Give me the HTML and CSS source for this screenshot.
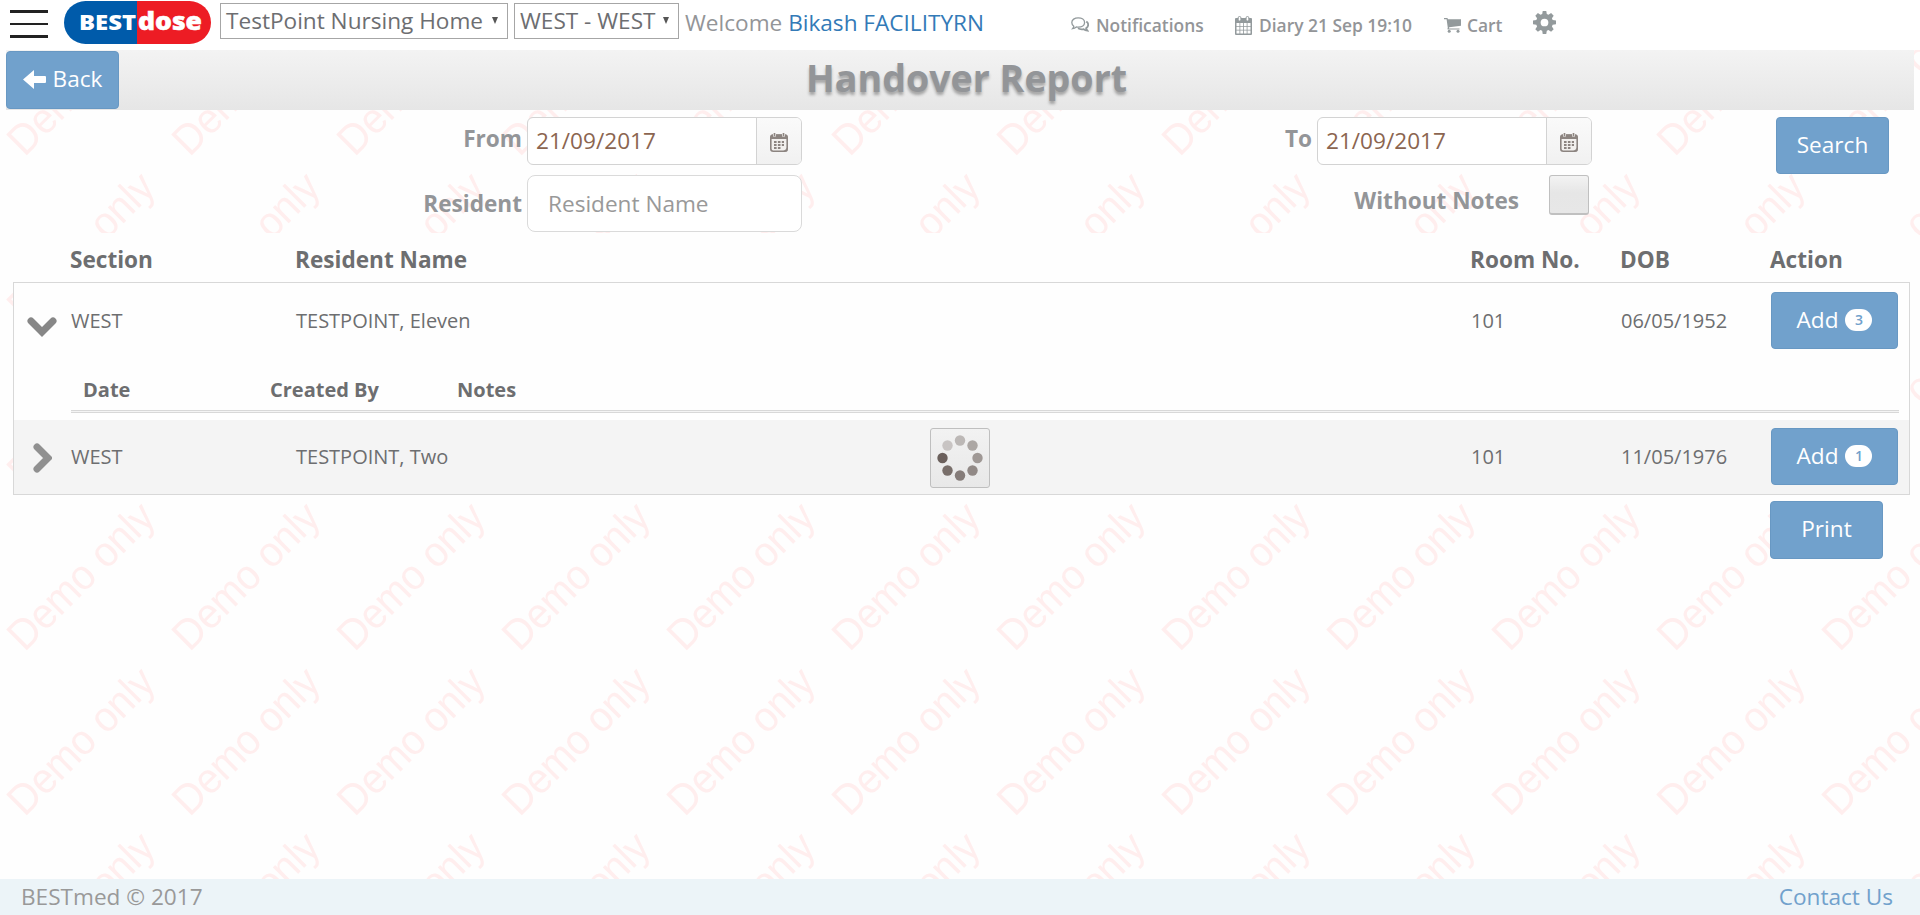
FILE: index.html
```html
<!DOCTYPE html>
<html lang="en">
<head>
<meta charset="utf-8">
<title>Handover Report</title>
<link rel="stylesheet" href="styles.css">
</head>
<body>
<svg class="watermark" width="1920" height="829">
  <defs>
    <pattern id="demo" width="165" height="165" patternUnits="userSpaceOnUse" y="-50">
      <text transform="translate(24.500 157.500) rotate(-45) scale(1 1.060)" class="watermark-text" textLength="188">Demo only</text>
    </pattern>
  </defs>
  <rect width="1920" height="829" fill="url(#demo)"/>
</svg>

<header class="topbar">
  <div class="menu"><span></span><span class="thin"></span><span></span></div>
  <svg class="logo" width="147" height="43" viewBox="0 0 147 43">
    <path d="M73 0H21.500a21.500 21.500 0 0 0 0 43H73z" fill="#005baa"/>
    <path d="M73 0h52.500a21.500 21.500 0 0 1 0 43H73z" fill="#ed1c24"/>
    <text x="15" y="28.500" class="logo-best" textLength="57" lengthAdjust="spacingAndGlyphs">BEST</text>
    <text x="74" y="28.500" class="logo-dose" textLength="64" lengthAdjust="spacingAndGlyphs">dose</text>
  </svg>
  <div class="select facility"><span>TestPoint Nursing Home</span><i class="caret"></i></div>
  <div class="select wing"><span>WEST - WEST</span><i class="caret"></i></div>
  <div class="welcome">Welcome <a>Bikash FACILITYRN</a></div>
  <nav class="links">
    <a class="link notifications">
      <svg width="18" height="16" viewBox="0 0 18 16" fill="none" stroke="#939a9c" stroke-width="1.300"><path d="M7.200.8c3.600 0 6.400 2 6.400 4.700s-2.800 4.700-6.400 4.700c-.7 0-1.300-.1-1.900-.2C4.200 10.900 3 11.400 1.600 11.600c.6-.7 1-1.400 1.200-2.300C1.500 8.400.8 7.100.8 5.500.8 2.800 3.600.8 7.200.8z"/><path d="M15.300 4.600c1.200.8 1.900 1.800 1.900 3.100 0 1.500-.8 2.700-2.100 3.500.2 1 .6 1.700 1.300 2.500-1.500-.2-2.700-.7-3.800-1.600-2 .4-4.100.1-5.600-.8" stroke-width="1.800"/></svg>
      <span>Notifications</span></a>
    <a class="link diary">
      <svg width="17" height="19" viewBox="0 0 17 19"><path d="M1 3h15v15H1z" fill="#939a9c" stroke="#939a9c" stroke-width="2" stroke-linejoin="round"/><path d="M1.500 7h3v3h-3zM5.300 7h2.800v3H5.300zM8.900 7h2.800v3H8.900zM12.500 7h3v3h-3zM1.500 10.800h3v3h-3zM5.300 10.800h2.800v3H5.300zM8.900 10.800h2.800v3H8.900zM12.500 10.800h3v3h-3zM1.500 14.600h3v3h-3zM5.300 14.600h2.800v3H5.300zM8.900 14.600h2.800v3H8.900zM12.500 14.600h3v3h-3z" fill="#fff"/><rect x="3.200" y=".5" width="2.700" height="4.500" rx="1.300" fill="#fff" stroke="#939a9c"/><rect x="11.100" y=".5" width="2.700" height="4.500" rx="1.300" fill="#fff" stroke="#939a9c"/></svg>
      <span>Diary 21 Sep 19:10</span></a>
    <a class="link cart">
      <svg width="17" height="15" viewBox="0 0 17 15" fill="#939a9c"><path d="M0 0h3.200q.5 0 .7 1.200H17v6.500L5.200 9.200l-.2 1.200H15.500v1.200H3.800q-.8-.2 0-1.800L2.600 1.300H0z"/><circle cx="5.200" cy="13.300" r="1.500"/><circle cx="14" cy="13.300" r="1.500"/></svg>
      <span>Cart</span></a>
    <svg class="gear" width="23" height="23" viewBox="0 0 22 22"><path fill="#939a9c" fill-rule="evenodd" d="M9.300 0h3.400l.5 2.900 1.600.7L17.300 2l2.500 2.500-1.700 2.500.7 1.600 3.200.6v3.500l-3.200.5-.7 1.700 1.700 2.500-2.500 2.500-2.500-1.700-1.600.7-.5 3.100H9.300l-.5-3.100-1.700-.7-2.400 1.700-2.500-2.500 1.700-2.500-.7-1.700-3.200-.5V9.200l3.200-.6.7-1.600-1.700-2.500L4.700 2l2.400 1.600 1.700-.7zM11 7.300a3.700 3.700 0 1 0 0 7.400 3.700 3.700 0 0 0 0-7.400z"/></svg>
  </nav>
</header>

<div class="titlebar">
  <button class="btn back"><svg width="23" height="19" viewBox="0 0 23 19"><path d="M11 0v6h11q1 0 1 1v5q0 1-1 1H11v6L0 9.500z" fill="#fff"/></svg><span>Back</span></button>
  <h1>Handover Report</h1>
</div>

<form class="filters">
  <label class="label from-label">From</label>
  <div class="date"><span>21/09/2017</span><i class="addon"><svg width="18" height="19" viewBox="0 0 18 19"><use href="#cal"/></svg></i></div>
  <label class="label to-label">To</label>
  <div class="date"><span>21/09/2017</span><i class="addon"><svg width="18" height="19" viewBox="0 0 18 19"><g id="cal"><rect x=".8" y="2" width="16.400" height="16.200" rx="2.500" fill="#f1efed" stroke="#8c8480" stroke-width="1.600"/><path d="M.5 6V4a2.500 2.500 0 0 1 2.500-2.500h12A2.500 2.500 0 0 1 17.500 4v2zM12 18.500q4-1 5.500-5v3.500q0 1.500-1.500 1.500z" fill="#8c8480"/><path d="M4.500 0v3.500M13.500 0v3.500" stroke="#f1efed" stroke-width="3"/><path d="M4.500 0v3M13.500 0v3" stroke="#8c8480" stroke-width="1.600"/><path d="M4 9h10M4 12h10M4 15h6.500" stroke="#8c8480" stroke-width="2.200" stroke-dasharray="2.600 1.300"/></g></svg></i></div>
  <button type="button" class="btn search">Search</button>
  <label class="label resident-label">Resident</label>
  <div class="resident">Resident Name</div>
  <label class="label notes-label">Without Notes</label>
  <span class="check"></span>
</form>

<main class="report">
  <div class="row head">
    <span></span><span>Section</span><span>Resident Name</span><span>Room No.</span><span>DOB</span><span>Action</span>
  </div>
  <div class="table">
    <div class="row first">
      <svg class="chev down" width="30" height="20" viewBox="0 0 30 20"><path d="M4 4l11 11L26 4" fill="none" stroke="#878787" stroke-width="7" stroke-linecap="round"/></svg>
      <span>WEST</span><span>TESTPOINT, Eleven</span><span>101</span><span>06/05/1952</span>
      <button class="btn add">Add<b>3</b></button>
    </div>
    <div class="notes">
      <span>Date</span><span>Created By</span><span>Notes</span>
    </div>
    <div class="row second">
      <svg class="chev right" width="19" height="30" viewBox="0 0 19 30"><path d="M4 4l11 11L4 26" fill="none" stroke="#909090" stroke-width="7" stroke-linecap="round"/></svg>
      <span>WEST</span><span>TESTPOINT, Two</span><span>101</span><span>11/05/1976</span>
      <button class="btn add">Add<b>1</b></button>
    </div>
    <div class="loading">
      <svg width="46" height="46" viewBox="-23 -23 46 46">
        <circle cy="-17.500" r="5.200" fill="#bcb8b6"/><circle cx="12.500" cy="-12.500" r="5.200" fill="#aca7a4"/><circle cx="17.500" r="5.200" fill="#9f9895"/><circle cx="12.500" cy="12.500" r="5.200" fill="#918986"/><circle cy="17.500" r="5.200" fill="#857c79"/><circle cx="-12.500" cy="12.500" r="5.200" fill="#786e6a"/><circle cx="-17.500" r="5.200" fill="#6b605c"/><circle cx="-12.500" cy="-12.500" r="5.200" fill="#c8c4c3"/>
      </svg>
    </div>
  </div>
  <button class="btn print">Print</button>
</main>

<footer class="footer"><span>BESTmed © 2017</span><a>Contact Us</a></footer>
</body>
</html>
```
FILE: styles.css
```css
* { box-sizing: border-box; }
body {
  margin: 0;
  height: 915px;
  display: flex;
  flex-direction: column;
  background: #fefefe;
  color: #939598;
  font: 22.6px/36px "Open Sans", sans-serif;
  overflow: hidden;
}
/* page-wide watermark behind all content */
.watermark { position: absolute; left: 0; top: 50px; z-index: -1; }
.watermark-text { font: 40px "Liberation Sans", sans-serif; fill: #ffeeee; }

.topbar { height: 50px; flex: none; display: flex; align-items: flex-start; background: #fff; }
.menu { width: 38px; height: 28px; margin: 10px 16px 0 10px; display: flex; flex-direction: column; justify-content: space-between; }
.menu span { height: 3px; background: #222; }
.menu .thin { height: 2px; }
.logo { margin: 1px 9px 0 0; flex: none; }
.logo-best { font: 800 21px "Open Sans", sans-serif; fill: #fff; }
.logo-dose { font: 800 24px "Open Sans", sans-serif; fill: #fff; stroke: #fff; stroke-width: .5px; }
.select { height: 36px; margin-top: 3px; border: 1px solid #a6a6a6; display: flex; align-items: center; justify-content: space-between; padding: 0 9px 1px 5px; color: #6d6e71; white-space: nowrap; background: #fff; }
.facility { width: 288px; margin-right: 6px; }
.wing { width: 165px; margin-right: 6px; }
.caret { border: 3.5px solid transparent; border-top: 7px solid #555; border-bottom: 0; }
.welcome { margin-top: 5px; width: 386px; white-space: nowrap; }
.welcome a { color: #337ab7; }
.links { display: flex; color: #939598; font-size: 17.4px; font-weight: 600; line-height: 24px; margin-top: 13px; }
.link { display: flex; align-items: center; gap: 7px; white-space: nowrap; }
.notifications { width: 164px; }
.diary { width: 209px; }
.cart { width: 89px; gap: 6px; }
.gear { margin-top: -2px; }

.titlebar { height: 60px; flex: none; margin: 0 6px; display: grid; grid-template-columns: 113px 1fr 100px; background: linear-gradient(#f3f3f3, #e6e6e6); }
.titlebar h1 { margin: 0; text-align: center; font: 700 37.6px/56px "Open Sans", sans-serif; text-shadow: 0 3px 3px rgba(0, 0, 0, .3); }
.btn { display: flex; align-items: center; justify-content: center; height: 57px; padding: 0 0 2px; border: 1px solid #6898c3; border-radius: 4px; background: #71a1cc; color: #fff; font: 22.6px/36px "Open Sans", sans-serif; }
.back { width: 113px; height: 58px; margin-top: 1px; gap: 7px; }

.filters { height: 123px; flex: none; display: grid; grid-template-columns: 527px 275px 515px 275px 184px 113px; grid-template-rows: 58px 57px; padding-top: 7px; }
.label { font-weight: 700; text-align: right; padding: 4px 5px 0 0; }
.date { height: 48px; display: flex; border: 1px solid #d3d3d3; border-radius: 6px; background: #fff; color: #8b6550; overflow: hidden; }
.date span { flex: 1; padding: 5px 8px; }
.addon { width: 45px; border-left: 1px solid #d3d3d3; background: linear-gradient(#fafafa, #f1f1f1); display: flex; align-items: center; justify-content: center; padding-top: 3px; }
.search { grid-column: 6; }
.resident { height: 57px; padding: 10px 20px; border: 1px solid #dadada; border-radius: 8px; background: #fff; color: #999; }
.resident-label { padding-top: 11px; }
.notes-label { grid-column: 3 / 5; padding: 8px 73px 0 0; }
.filters > .check { grid-column: 4; grid-row: 2; justify-self: end; }
.filters > .notes-label { grid-row: 2; }
.check { width: 40px; height: 40px; margin-right: 3px; border: 1px solid #c0c0c0; border-bottom-width: 2px; border-radius: 3px; background: linear-gradient(#f3f3f3, #e6e6e6 45%, #e7e7e7); }

.report { flex: 1; margin: 0 10px 0 13px; color: #6d6e70; }
.row { display: grid; grid-template-columns: 57px 225px 1175px 150px 150px 127px; }
.head { height: 49px; padding: 9px 0 0; font-weight: 700; background: #fefefe; }
.table { position: relative; height: 213px; border: 1px solid #d8d8d8; background: #fefefe; }
.table .row { font-size: 20px; line-height: 30px; color: #6d6e70; }
.first { height: 83px; padding-top: 9px; }
.table .row > span { padding-top: 14px; }
.first .chev { margin: 25px 0 0 13px; }
.notes { margin: 0 10px 7px 57px; padding-left: 12px; height: 47px; display: grid; grid-template-columns: 187px 187px 1fr; font-size: 20px; font-weight: 700; line-height: 30px; padding-top: 9px; box-shadow: inset 0 -1px #d8d8d8, inset 0 -2px #f4f4f4, inset 0 -3px #d8d8d8; }
.second { height: 74px; padding-top: 8px; background: #f4f4f4; }
.second .chev { margin: 15px 0 0 19px; }
.add b { margin-left: 7px; width: 27px; height: 22px; border-radius: 11px; background: #fff; color: #71a1cc; font-size: 14px; font-weight: 600; line-height: 22px; text-align: center; }
.print { width: 113px; height: 58px; margin: 6px 0 0 1757px; }
/* busy indicator floating over the table */
.loading { position: absolute; left: 916px; top: 145px; width: 60px; height: 60px; border: 1px solid #bfbfbf; border-radius: 3px; background: linear-gradient(#f2f2f2, #e8e8e8); display: flex; align-items: center; justify-content: center; }

.footer { height: 36px; flex: none; display: flex; justify-content: space-between; padding: 0 27px 0 21px; background: #ecf4f8; color: #999; }
.footer a { color: #71a1cc; }
```
